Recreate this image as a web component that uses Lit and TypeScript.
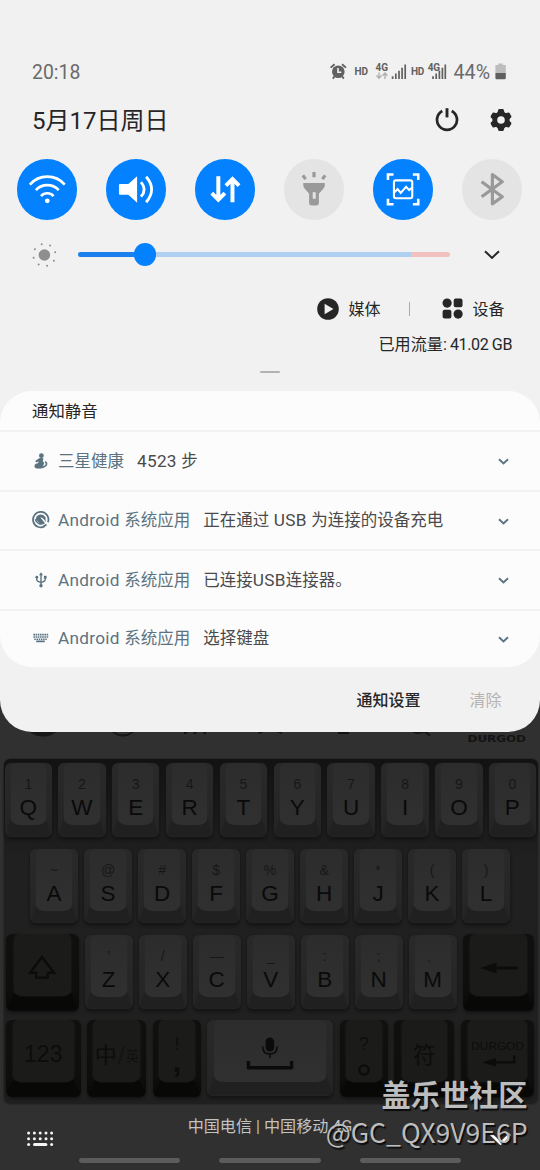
import { LitElement, html, css, svg, nothing } from "lit";
import { customElement, property } from "lit/decorators.js";

const chevron = (w: number, h: number, color: string, sw: number) => html`
  <svg width=${w} height=${h} viewBox="0 0 ${w} ${h}" fill="none" stroke=${color} stroke-width=${sw}>
    <path d="M1 1.2 L${w / 2} ${h - 1.6} L${w - 1} 1.2" />
  </svg>`;

const tiles = [
  { on: true, art: svg`
    <g fill="none" stroke="#fff" stroke-width="2.7">
      <path d="M12.9 25.8A23.1 23.1 0 0 1 47.9 25.8" /><path d="M18.9 31.2A15.6 15.6 0 0 1 41.9 31.2" />
      <path d="M24.1 37.2A8.4 8.4 0 0 1 36.7 37.2" /></g><circle cx="30.4" cy="42" r="2.4" fill="#fff" />` },
  { on: true, art: svg`
    <path d="M14 25H22.4L31.2 17.2V43.9L22.4 35.9H14Q13 35.9 13 34.9V26Q13 25 14 25Z" fill="#fff" />
    <g fill="none" stroke="#fff" stroke-width="2.8"><path d="M35.1 23.2Q41.6 30.5 35.1 37.8" /><path d="M40.3 17.8Q51.2 30.5 40.3 43.4" /></g>` },
  { on: true, art: svg`
    <g fill="none" stroke="#fff" stroke-width="4"><path d="M23.4 17.3V41M16.8 34.2L23.4 40.8L30 34.2" /><path d="M37.6 43.4V20M31 26.8L37.6 20.2L44.2 26.8" /></g>` },
  { on: false, art: svg`
    <g stroke="#999" stroke-width="3.2"><path d="M30.1 13V18.2M18.9 16.4L21.7 20.2M41.3 16.4L38.5 20.2" /></g>
    <path fill-rule="evenodd" fill="#999" d="M19.4 24H40.9V26.7Q40.9 28 40 29L35 34.8V44Q35 46.6 32.4 46.6H27.7Q25.2 46.6 25.2 44V34.8L20.3 29Q19.4 28 19.4 26.7ZM28.8 33.4V39.8H31.8V33.4Z" />` },
  { on: true, art: svg`
    <g fill="none" stroke="#fff"><path stroke-width="2.6" d="M15 21V15.5H20.6M40 15.5H45.4V21M45.4 39.8V45.4H40M20.6 45.4H15V39.8" />
    <rect x="21" y="21.4" width="18.4" height="18" rx="2" stroke-width="2.1" />
    <path stroke-width="2.1" d="M21 34L24.7 30.2L27.8 34L33.2 27.8L36.3 31.2L39.4 28.6" /></g>` },
  { on: false, art: svg`
    <path fill="none" stroke="#999" stroke-width="3.2" stroke-linejoin="round" d="M19.7 22.8L40.4 37.9L30.5 45V15.6L40.4 22.8L19.7 37.9" />` },
];

const notes = [
  { h: 60, app: ["", "三星健康"], body: html`<span class="lat">4523 </span>步`, art: svg`
    <g fill="#5b7380"><circle cx="9.4" cy="3.7" r="2.4" /><path d="M6.8 6.4Q9.5 5 11.4 6.6L10.8 9.2L12.2 11L10.8 15Q6 18 2.8 15.4Q1.6 13.2 4.4 11.6L6 11.2L6.6 9.4L4.2 10.2Q2.6 9.6 3.8 8.4Z" /></g>
    <path d="M13 9.6Q16 11.6 13.4 13.8Q10.6 16 6.6 15.4" fill="none" stroke="#5b7380" stroke-width="1.7" />` },
  { h: 59.6, app: ["Android ", "系统应用"], body: html`正在通过<span class="lat"> USB </span>为连接的设备充电`, art: svg`
    <g fill="none" stroke="#5b7380" stroke-width="1.8"><path d="M12.6 15.3A7.7 7.7 0 1 1 16 11.2" /><path d="M14.5 13.4L11.4 15.6" /></g>
    <path fill="#5b7380" d="M4 6.8Q5.6 3.6 9 3.6Q12 3.8 13.6 6.6V11.2Q11.8 6.8 8.2 6.3L13 12.3Q11.4 13.6 9 13.8L4 8.8Z" />
    <path d="M3.2 8.2Q4.2 11.4 8.6 13.6" stroke="#5b7380" stroke-width="1.2" fill="none" />` },
  { h: 59.7, app: ["Android ", "系统应用"], body: html`已连接<span class="lat">USB</span>连接器。`, art: svg`
    <g fill="none" stroke="#5b7380" stroke-width="1.4"><path d="M9 3V15M4.8 6.5V8.4Q4.8 10.4 9 11.4Q13.2 10.4 13.2 8.4V6.2" /></g>
    <g fill="#5b7380"><path d="M9 1.2L11 4.2H7Z" /><circle cx="9" cy="14.8" r="1.7" /><circle cx="4.8" cy="6.2" r="1.4" /><rect x="11.9" y="4.8" width="2.7" height="2.7" /></g>` },
  { h: 57.2, app: ["Android ", "系统应用"], body: html`选择键盘`, art: svg`
    <g fill="none" stroke="#5b7380" stroke-width="1.6"><path d="M1.4 5.6H16.2M1.4 8H16.2" stroke-dasharray="1.6 .6" /><path d="M2.3 10.3H15.4" stroke-dasharray="1.5 .7" /><path d="M4.2 12.4H12.8" /></g>` },
];

type Key = { l?: string; s?: string; w?: number; dark?: boolean; art?: unknown; kind?: string };
const letters = (a: string, b: string[]): Key[] => [...a].map((l, i) => ({ l, s: b[i] }));

const row1 = letters("QWERTYUIOP", [..."1234567890"]);
row1[0].w = 46.7;
row1[9].w = 46.5;
const row2 = letters("ASDFGHJKL", ["~", "@", "#", "$", "%", "&", "*", "(", ")"]);
const row3: Key[] = [
  { w: 72.5, dark: true, art: svg`<svg width="30" height="25" viewBox="0 0 30 25"><path d="M15 2L27 17.7H20.7V22.6H9.3V17.7H3Z" fill="none" stroke="#0c0c0b" stroke-width="2.4" /></svg>` },
  ...letters("ZXCVBNM", ["’", "/", "—", "_", ":", ";", "、"]),
  { w: 71.3, dark: true, art: svg`<svg width="40" height="12" viewBox="0 0 40 12"><path d="M1 6L17.5 .5V4.5H38.5V7.5H17.5V11.5Z" fill="#0c0c0b" /></svg>` },
];
const row4: Key[] = [
  { w: 75.5, dark: true, l: "123", kind: "num" },
  { w: 59, dark: true, kind: "lang", art: html`<b>中</b><i>/</i><em>英</em>` },
  { w: 48, dark: true, kind: "punct", s: "!", l: "," },
  { w: 126, kind: "space", art: svg`<svg width="50" height="36" viewBox="0 0 50 36"><rect x="20.6" y="1.5" width="8.6" height="14" rx="4.3" fill="#0b0b0b" /><path d="M17.6 10.5Q17.6 18 24.9 18Q32.2 18 32.2 10.5M24.9 18V22" fill="none" stroke="#0b0b0b" stroke-width="1.6" /><path d="M3.4 25V31.7H46.6V25" fill="none" stroke="#0b0b0b" stroke-width="3.4" stroke-linejoin="round" /></svg>` },
  { w: 48, dark: true, kind: "punct", s: "?", art: svg`<svg width="14" height="14" viewBox="0 0 14 14"><circle cx="7" cy="7" r="4.7" fill="none" stroke="#0c0c0b" stroke-width="2.2" /></svg>` },
  { w: 60, dark: true, l: "符", kind: "sym" },
  { w: 73.5, dark: true, kind: "enter", l: "DURGOD", art: svg`<svg width="36" height="12" viewBox="0 0 36 12"><path d="M1 7.4L15 3V6.2H32V.5H34.4V8.6H15V11.6Z" fill="#0c0c0b" /></svg>` },
];

@customElement("key-cap")
class KeyCap extends LitElement {
  @property({ attribute: false }) k: Key = {};
  static styles = css`
    :host { display: block; flex: none; }
    .key { position: relative; height: 74px; border-radius: 6px; background: linear-gradient(#292929, #262626 70%, #232323);
      box-shadow: 0 3px 3px #151515, 0 0 2px #1b1b1b; display: flex; justify-content: center; }
    .key::before { content: ""; position: absolute; left: 1px; right: 1px; bottom: 1px; height: 22px; border-radius: 4px;
      background: #202020; clip-path: polygon(6px 0, calc(100% - 6px) 0, 100% 100%, 0 100%); }
    .face { position: relative; box-sizing: border-box; width: calc(100% - 12px); height: 62px; border-radius: 6px 6px 10px 10px / 6px 6px 6px 6px;
      background: linear-gradient(#2c2c2c, #303030); box-shadow: 0 0 1px #333; display: flex; flex-direction: column; align-items: center;
      font-family: "Liberation Sans", sans-serif; color: #0a0a0a; padding-top: 13px; }
    .sub { font-size: 14px; line-height: 16px; height: 17px; color: #171717; }
    .main { font-size: 22.5px; line-height: 30px; height: 30px; }
    .dark { height: 77.5px; background: linear-gradient(#10100f, #0e0e0d 75%, #080807); box-shadow: 0 2px 3px #141414; }
    .dark::before { background: #080807; height: 16px; }
    .dark .face { width: calc(100% - 15px); background: #1b1b19; box-shadow: 0 0 2px #262624; color: #0d0d0c; justify-content: center; padding: 0; }
    .space { height: 76.5px; }
    .space .face { width: calc(100% - 14px); padding-top: 16px; }
    .num .main { font-size: 23px; padding-top: 7px; }
    .lang .face, .punct .face { width: calc(100% - 12px); }
    .lang .face { flex-direction: row; align-items: center; font-family: "Noto Sans CJK SC", sans-serif; padding-top: 4px; white-space: nowrap; line-height: 24px; }
    .lang b { font-weight: 400; font-size: 22px; } .lang i { font-size: 18px; font-style: normal; color: #111110; margin: 0 1px; }
    .lang em { font-style: normal; font-size: 13.5px; padding-top: 5px; color: #111110; }
    .punct .face { justify-content: flex-start; padding-top: 14px; }
    .punct .sub { font-size: 19px; line-height: 20px; height: 20px; color: #0f0f0e; }
    .punct .main { font-size: 32px; line-height: 14px; height: 14px; font-weight: bold; }
    .punct svg { margin-top: 9px; }
    .sym .main { font-family: "Noto Sans CJK SC", sans-serif; padding-top: 4px; }
    .enter .main { font-size: 11.8px; line-height: 14px; height: 14px; padding-top: 5px; }
    .enter svg { margin-top: 2px; margin-left: 2px; }
    .shiftdown { padding-top: 9px; }
  `;
  render() {
    const k = this.k;
    return html`<div class="key ${k.dark ? "dark" : ""} ${k.kind ?? ""}" style="width:${k.w ?? 47.6}px">
      <div class="face">
        ${k.s ? html`<span class="sub">${k.s}</span>` : nothing}
        ${k.l ? html`<span class="main">${k.l}</span>` : nothing}
        ${k.art ? (k.kind ? k.art : html`<span class="shiftdown">${k.art}</span>`) : nothing}
      </div></div>`;
  }
}

@customElement("app-root")
class AppRoot extends LitElement {
  static styles = css`
    :host { display: block; position: relative; width: 540px; height: 1170px; overflow: hidden; background: #303030;
      font-family: Roboto, "Noto Sans CJK SC", sans-serif; color: #262626; }
    svg { display: block; flex: none; }
    .panel { height: 732px; box-sizing: border-box; padding-top: 62px; background: #f1f1f1; border-radius: 0 0 32px 32px; }
    .status { display: flex; justify-content: space-between; align-items: flex-start; height: 20px; padding: 0 32px; line-height: 22px; font-size: 19.4px; color: #6a6a6a; }
    .date { display: flex; align-items: center; height: 34px; margin: 22px 27.3px 21px 32px; font-size: 24px; }
    .date .text { flex: 1; line-height: 34px; }
    .date svg { margin-bottom: 2px; }
    .date svg + svg { margin-left: 29.4px; }
    .tiles { display: grid; grid-template-columns: repeat(6, 89px); justify-items: center; padding-left: 2.6px; height: 61px; }
    .tile { width: 60.8px; height: 60.8px; border-radius: 50%; background: #e4e4e4; }
    .tile.on { background: #0381fe; }
    .slider { display: flex; align-items: center; height: 69px; padding: 0 39px 0 32px; }
    .track { display: flex; align-items: center; margin: 0 34.5px 0 20.5px; width: 372px; height: 4.6px; border-radius: 2.3px; background: linear-gradient(90deg, #1a80ee 0 68px, #afd0f1 68px 333.5px, #f2c0bf 333.5px); }
    .knob { width: 22.6px; height: 22.6px; margin-left: 56.2px; border-radius: 50%; background: #0381fe; flex: none; }
    .media { display: flex; align-items: center; justify-content: flex-end; height: 39px; padding-right: 35.6px; font-size: 16px; }
    .media .div { width: 1.3px; height: 14px; background: #aaa; margin: 0 32.2px 0 28px; }
    .media span { margin-left: 9.3px; line-height: 36px; padding-top: 2px; }
    .data { height: 32px; line-height: 33px; padding-right: 28px; text-align: right; font-size: 16.1px; }
    .data span { letter-spacing: -.42px; }
    .grip { height: 30.5px; box-sizing: border-box; padding-top: 10.8px; }
    .grip div { width: 19.5px; height: 2.5px; border-radius: 1.2px; margin: 0 auto; background: #b2b2b2; }
    .card { height: 276px; border-radius: 32px; overflow: hidden; background: #fcfcfc; }
    .head { height: 39px; line-height: 41px; padding-left: 32px; font-size: 16.4px; }
    .note { display: flex; align-items: center; box-sizing: border-box; border-top: 2px solid #f2f2f2; padding: 0 31.5px 0 32px; font-size: 16.5px; color: #4a4a4a; line-height: 24px; }
    .note .app { color: #5b7380; margin: 1px 13px 0 8px; white-space: pre; }
    .lat { font-size: 17.2px; letter-spacing: .28px; white-space: pre; }
    .note .body { flex: 1; padding-top: 1px; }
    .note > svg:last-child { margin-top: 2px; }
    .foot { display: flex; justify-content: flex-end; height: 65px; line-height: 67px; padding-right: 38.6px; font-size: 16px; font-weight: 500; }
    .foot span { margin-left: 49px; color: #b4b4b4; font-weight: 400; }
    .tray { margin: 0 2px 0 4px; height: 345px; box-sizing: border-box; border-radius: 6px; background: linear-gradient(#121212 0, #141414 8px, #1d1d1d 80px, #202020 100px); box-shadow: 0 0 2px #1a1a1a; padding: 4px 0 0; }
    .row { display: flex; justify-content: space-between; align-items: center; }
    .r1 { padding: 0 2.3px 0 1px; height: 74px; }
    .r2 { padding: 0 28px 0 26.3px; height: 74px; margin-top: 12.2px; }
    .r3 { padding: 0 3.7px 0 2px; height: 78px; margin-top: 10.3px; }
    .r4 { padding: 0 3.7px 0 1.5px; height: 77.5px; margin-top: 8.5px; align-items: flex-start; }
    .nav { display: flex; flex-direction: column; height: 66px; }
    .carrier { text-align: center; font-size: 16.1px; line-height: 22px; margin-top: 12px; color: #c2c2c2; }
    .tools { display: flex; justify-content: space-between; padding: 0 29px 0 26px; margin-top: -8px; height: 18px; align-items: center; }
    .bars { display: flex; justify-content: center; gap: 39.4px; margin-top: 10px; }
    .bars i { width: 101.4px; height: 4.8px; border-radius: 2.4px; background: #5c5c5c; }
    .mark { position: absolute; right: 12.5px; top: 1073px; text-align: right; font-family: "Noto Sans CJK SC", sans-serif; color: #bdbdbd; text-shadow: 1.5px 1.5px 1px #0c0c0c; white-space: nowrap; }
    .mark b { display: block; font-size: 29.2px; line-height: 40px; }
    .mark span { display: block; font-size: 26.6px; line-height: 38px; }
  `;

  render() {
    return html`
      <div class="panel">
        <div class="status"><span>20:18</span>
          <svg width="180" height="26" viewBox="328 62 180 26" font-family="Roboto" fill="#606060">
            <circle cx="338.3" cy="71.8" r="6.3" /><path d="M338 68V72.3H341.3" fill="none" stroke="#f1f1f1" stroke-width="1.6" />
            <path d="M330.6 67.6L334.6 64.2M346 67.6L342 64.2M334.4 76.5L332.8 78.6M342.2 76.5L343.8 78.6" stroke="#606060" stroke-width="1.9" />
            <g font-weight="700"><text x="354.6" y="74.7" font-size="10" textLength="13.4">HD</text><text x="410.9" y="74.7" font-size="10" textLength="13.4">HD</text>
            <text x="375.6" y="70.6" font-size="10" textLength="12.4">4G</text><text x="427.8" y="70.6" font-size="10" textLength="12.4">4G</text></g>
            <path d="M379 72.5V78M376.5 75.6L379 78.2L381.5 75.6M385 79V73.3M382.5 75.7L385 73.1L387.5 75.7" fill="none" stroke="#b0b0b0" stroke-width="1.4" />
            <path d="M392.6 76.2V79M395.8 73.6V79M399 70.7V79M402.1 67.8V79M405.2 64.5V79" stroke="#606060" stroke-width="1.7" />
            <path d="M433 76.2V79M436.2 73.6V79M439.4 70.7V79M442.4 67.8V79M445.3 64.5V79" stroke="#606060" stroke-width="1.7" />
            <text x="453.6" y="79" font-size="19.6" fill="#6a6a6a" textLength="36.4">44%</text>
            <path d="M498.2 63.5H502.8V65H505.8V73H495.4V65H498.2Z" fill="#bdbdbd" /><path d="M495.4 73H505.8V78Q505.8 79.2 504.6 79.2H496.6Q495.4 79.2 495.4 78Z" />
          </svg>
        </div>
        <div class="date"><span class="text">5月17日周日</span>
          <svg width="24" height="24" viewBox="0 0 24 24" fill="none" stroke="#262626"><path d="M7.3 3A10 10 0 1 0 16.7 3" stroke-width="2.7" /><path d="M12 .2V9.4" stroke-width="2.9" /></svg>
          <svg width="24" height="24" viewBox="0 0 24 24" fill="#262626"><circle cx="12" cy="12" r="6.2" fill="none" stroke="#262626" stroke-width="4.8" />
            ${[0, 60, 120, 180, 240, 300].map((a) => svg`<path transform="rotate(${a} 12 12)" d="M8.2 5.5L9.2 2Q9.5 1.1 10.4 1.1H13.6Q14.5 1.1 14.8 2L15.8 5.5Z" />`)}
          </svg>
        </div>
        <div class="tiles">${tiles.map((t) => html`<div class="tile ${t.on ? "on" : ""}"><svg width="60.8" height="60.8" viewBox="0 0 61 61">${t.art}</svg></div>`)}</div>
        <div class="slider">
          <svg width="25" height="25" viewBox="0 0 25 25" fill="#8e8e8e"><circle cx="12.4" cy="13" r="5.8" />
            ${[0, 1, 2, 3, 4, 5, 6, 7].map((i) => { const a = ((76 + i * 45) * Math.PI) / 180; return svg`<circle cx=${12.4 + 11.1 * Math.cos(a)} cy=${13 + 11.1 * Math.sin(a)} r="1" />`; })}
          </svg>
          <div class="track"><div class="knob"></div></div>
          ${chevron(16, 9.5, "#262626", 2)}
        </div>
        <div class="media">
          <svg width="22" height="22" viewBox="0 0 22 22"><circle cx="11" cy="11" r="10.8" fill="#262626" /><path d="M7.6 5.8V16.2L16.4 11Z" fill="#f1f1f1" /></svg>
          <span>媒体</span><div class="div"></div>
          <svg width="21" height="21" viewBox="0 0 21 21" fill="#262626"><circle cx="5.1" cy="5.1" r="4.6" /><rect x="11.7" y=".6" width="8.8" height="8.6" rx="2" /><rect x=".6" y="11.8" width="8.8" height="8.6" rx="2" /><circle cx="16.1" cy="16.1" r="4.6" /></svg>
          <span>设备</span>
        </div>
        <div class="data">已用流量<span>: 41.02 GB</span></div>
        <div class="grip"><div></div></div>
        <div class="card">
          <div class="head">通知静音</div>
          ${notes.map((n) => html`<div class="note" style="height:${n.h}px">
            <svg width="18" height="18" viewBox="0 0 18 18">${n.art}</svg>
            <span class="app"><span class="lat">${n.app[0]}</span>${n.app[1]}</span><span class="body">${n.body}</span>
            ${chevron(11, 7, "#5b7380", 1.9)}
          </div>`)}
        </div>
        <div class="foot">通知设置<span>清除</span></div>
      </div>
      <svg class="strip" width="540" height="27" viewBox="0 732 540 27">
        <path d="M30 732H56Q51 736.5 43 736.5Q35 736.5 30 732Z" fill="#171717" />
        <path d="M112.5 731.5Q123 739.5 133.5 731.5" fill="none" stroke="#171717" stroke-width="1.8" />
        <path d="M184 732H188L186 734H184ZM194 732H197L195.5 734H193ZM203.5 732H206V734H203.5ZM258 732H264L259 734ZM276 732H282V734ZM338 732H349V734H338Z" fill="#121212" />
        <path d="M412 731Q418 735 424 731L430 735.6" fill="none" stroke="#161616" stroke-width="2" />
        <text x="467.5" y="742" font-family="DejaVu Sans" font-weight="bold" font-size="9.4" fill="#131313" textLength="58.5" lengthAdjust="spacingAndGlyphs">DURGOD</text>
      </svg>
      <div class="tray">
        ${[row1, row2, row3, row4].map((r, i) => html`<div class="row r${i + 1}">${r.map((k) => html`<key-cap .k=${k}></key-cap>`)}</div>`)}
      </div>
      <div class="nav">
        <div class="carrier">中国电信 | 中国移动 4G</div>
        <div class="tools">
          <svg width="28" height="16" viewBox="0 0 28 16" fill="#f4f4f4">
            ${[2.6, 8.4, 14.2, 20, 25.6].map((x) => svg`<circle cx=${x} cy="2" r="1.5" /><circle cx=${x} cy="7.7" r="1.5" />`)}
            <circle cx="2.6" cy="13.5" r="1.5" /><circle cx="25.6" cy="13.5" r="1.5" /><rect x="7" y="12" width="14.4" height="3" rx="1.5" />
          </svg>
          ${chevron(21, 12, "#fff", 2.8)}
        </div>
        <div class="bars"><i></i><i></i><i></i></div>
      </div>
      <div class="mark"><b>盖乐世社区</b><span>@GC_QX9V9E6P</span></div>
    `;
  }
}
